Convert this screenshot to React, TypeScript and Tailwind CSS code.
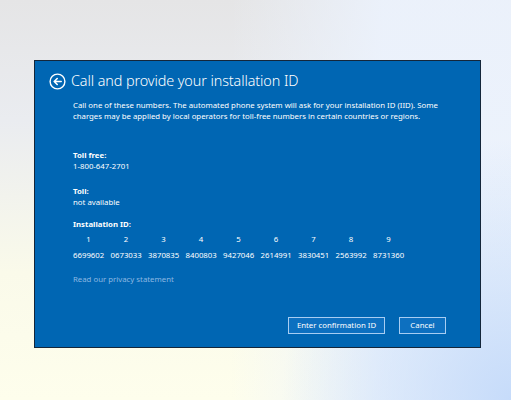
import React from 'react';

const ID_BLOCKS = ['6699602', '0673033', '3870835', '8400803', '9427046', '2614991', '3830451', '2563992', '8731360'];

function BackIcon() {
  return (
    <svg width="17" height="17" viewBox="0 0 17 17" fill="none" stroke="white">
      <circle cx="8.5" cy="8.5" r="7.4" strokeWidth="1.4" />
      <path d="M12.2 8.5H5.4M8.2 5.5L5.2 8.5l3 3" strokeWidth="1.6" strokeLinecap="round" strokeLinejoin="round" />
    </svg>
  );
}

export default function App() {
  return (
    <div className="w-[511px] h-[400px] overflow-hidden pt-[60px] pl-[34px] bg-[radial-gradient(ellipse_45%_65%_at_100%_100%,rgba(196,218,250,0.95),transparent),linear-gradient(to_right,transparent_45%,rgba(236,243,254,0.85)_75%),linear-gradient(to_bottom,#e5e5e6_0%,#eaecf0_30%,#fafaea_68%,#fefeec_100%)] font-['Noto_Sans','Liberation_Sans',sans-serif]">
      <div className="w-[447px] h-[288px] border border-[#14263a] bg-[#0066b3] text-white flex flex-col">
        {/* Title */}
        <div className="flex items-center h-[20px] mt-[10px] pl-[14px]">
          <BackIcon />
          <h1 className="ml-[5px] text-[14.4px] leading-[20px] font-light tracking-[-0.1px] whitespace-nowrap">Call and provide your installation ID</h1>
        </div>

        <div className="pl-[38px] text-[7.8px] leading-[11px]">
          <p className="mt-[8.5px] w-[390px]">
            Call one of these numbers. The automated phone system will ask for your installation ID (IID). Some charges may be applied by local operators for toll-free numbers in certain countries or regions.
          </p>

          <p className="mt-[28.5px] font-bold">Toll free:</p>
          <p>1-800-647-2701</p>

          <p className="mt-[14px] font-bold">Toll:</p>
          <p>not available</p>

          <p className="mt-[10.5px] font-bold">Installation ID:</p>
          <div className="flex mt-[4.5px]">
            {ID_BLOCKS.map((_, i) => (
              <span key={i} className="w-[37.5px] pr-[6.5px] text-center">{i + 1}</span>
            ))}
          </div>
          <div className="flex mt-[4.5px]">
            {ID_BLOCKS.map(b => (
              <span key={b} className="w-[37.5px] pr-[6.5px] text-center">{b}</span>
            ))}
          </div>

          <p className="mt-[13.5px] text-[#8cb8e2]">Read our privacy statement</p>
        </div>

        {/* Buttons */}
        <div className="mt-auto mb-[13px] mr-[34px] flex justify-end gap-[14px] text-[7.8px]">
          <button className="w-[97px] h-[17px] border border-[#a7cdf2] bg-[#0d70c0]">Enter confirmation ID</button>
          <button className="w-[47px] h-[17px] border border-[#a7cdf2] bg-[#0d70c0]">Cancel</button>
        </div>
      </div>
    </div>
  );
}
